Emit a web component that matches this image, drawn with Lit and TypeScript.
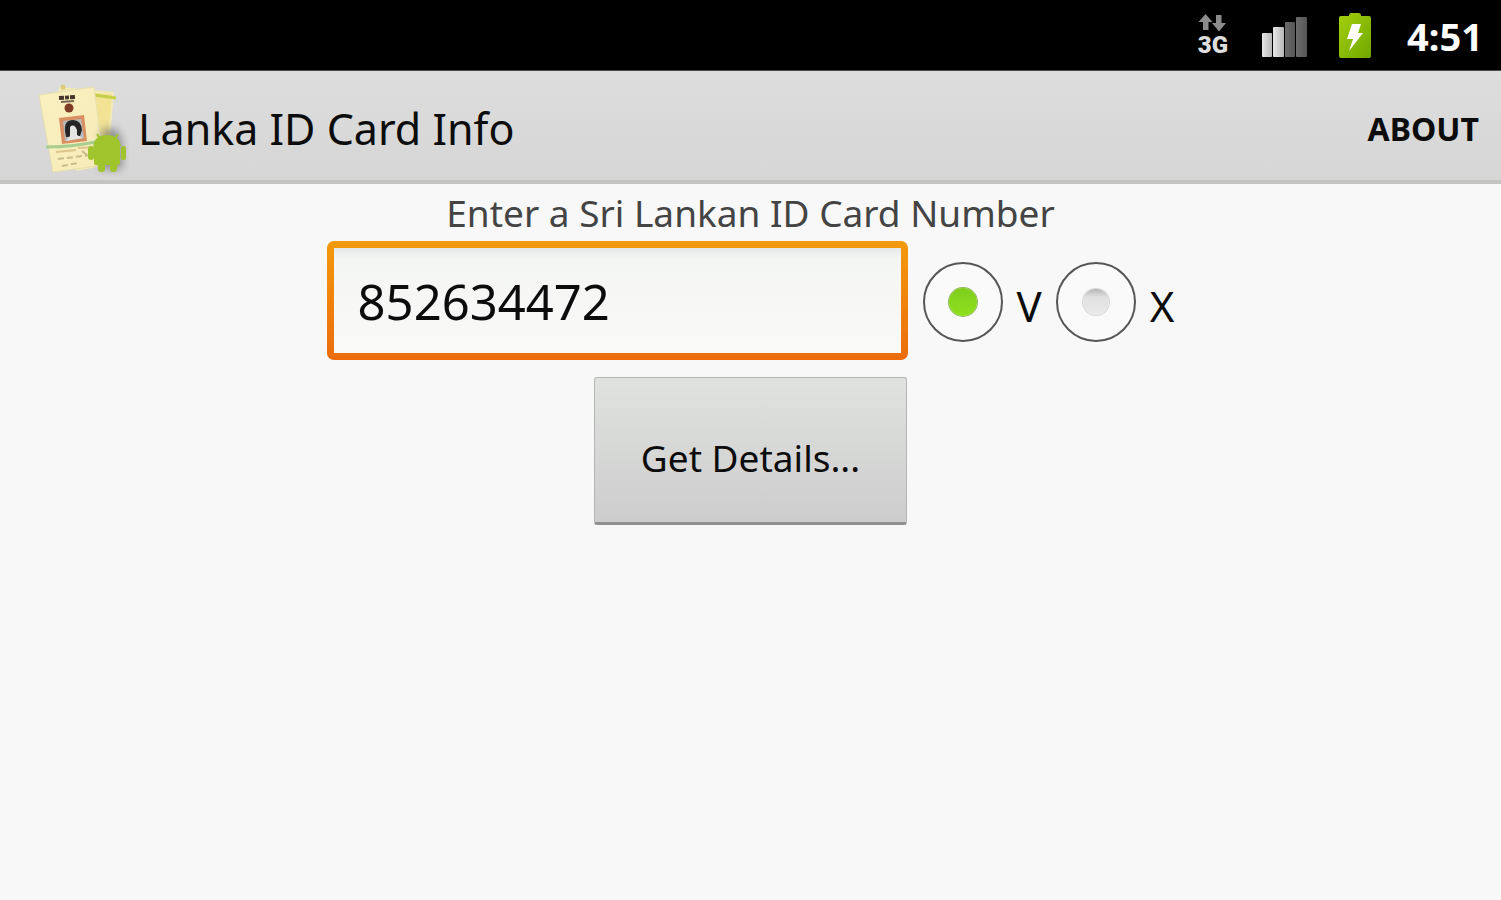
import { LitElement, html, css } from "lit";
import { customElement, state } from "lit/decorators.js";

@customElement("status-bar")
class StatusBar extends LitElement {
  static styles = css`
    :host {
      display: flex;
      align-items: center;
      justify-content: flex-end;
      box-sizing: border-box;
      height: 71px;
      padding: 0 18px 0 16px;
      background: #000;
      border-bottom: 1px solid #4a4a4a;
      color: #fff;
      font: bold 38px/52px "Noto Sans", "Open Sans", sans-serif;
    }
    svg {
      display: block;
      flex: none;
    }
    .data {
      display: flex;
      flex-direction: column;
      align-items: center;
      margin-right: 33px;
      color: #dedede;
      font: 900 24px/22px Roboto, "Noto Sans", sans-serif;
    }
    .signal {
      margin-right: 31px;
    }
    .battery {
      margin-right: 35px;
    }
    time {
      padding-top: 2px;
    }
  `;

  render() {
    return html`
      <div class="data">
        <svg width="30" height="20" viewBox="0 0 30 20" aria-hidden="true">
          <path fill="#8c8c8c" d="M7.500 0L14.500 8H10.500V16H5V8H.5ZM21 17.500L14 9H18V1H23.500V9H28Z" />
        </svg>
        <span>3G</span>
      </div>
      <svg class="signal" width="46" height="44" viewBox="0 0 46 44" aria-label="Signal strength">
        <defs>
          <linearGradient id="on" x2="1"><stop stop-color="#e6e6e6" /><stop offset="1" stop-color="#b8b8b8" /></linearGradient>
          <linearGradient id="off" x2="1"><stop stop-color="#6c6c6c" /><stop offset="1" stop-color="#565656" /></linearGradient>
        </defs>
        <rect x="1" y="20" width="10" height="24" rx="1" fill="url(#on)" />
        <rect x="12" y="14" width="11" height="30" rx="1" fill="url(#on)" />
        <rect x="24" y="9" width="10" height="35" rx="1" fill="url(#off)" />
        <rect x="35" y="4" width="11" height="40" rx="1" fill="url(#off)" />
      </svg>
      <svg class="battery" width="34" height="48" viewBox="0 0 34 48" aria-label="Battery charging">
        <defs>
          <linearGradient id="cell" y2="1"><stop stop-color="#a4cf0c" /><stop offset="1" stop-color="#70a800" /></linearGradient>
        </defs>
        <path fill="url(#cell)" d="M11 4.500Q11 2 13 2H21Q23 2 23 4.500V5H31Q33 5 33 7V45Q33 47 31 47H3Q1 47 1 45V7Q1 5 3 5H11Z" />
        <path fill="#fff" d="M14 13H23L20 22H25L11 40L15 28H9Z" />
      </svg>
      <time>4:51</time>
    `;
  }
}

@customElement("app-root")
class AppRoot extends LitElement {
  static styles = css`
    :host {
      display: flex;
      flex-direction: column;
      min-height: 100vh;
      background: #f8f8f8;
      color: #0c0c0c;
      font-family: "Noto Sans", "Open Sans", sans-serif;
    }
    header {
      display: flex;
      align-items: center;
      box-sizing: border-box;
      height: 113px;
      padding: 6px 22px 0 34px;
      background: linear-gradient(#dcdddc, #d5d6d5);
      border-bottom: 4px solid #c4c5c3;
    }
    .logo {
      flex: none;
      display: block;
      margin-right: 8px;
    }
    h1 {
      flex: 1;
      margin: 0;
      font-size: 43px;
      font-weight: 400;
      line-height: 56px;
    }
    button {
      font-family: inherit;
      color: inherit;
      cursor: pointer;
    }
    .about {
      padding: 0;
      border: 0;
      background: none;
      font-size: 32px;
      font-weight: 700;
      line-height: 56px;
    }
    form {
      display: flex;
      flex-direction: column;
      align-items: center;
    }
    .prompt {
      font-size: 37px;
      line-height: 57px;
      color: #444;
    }
    .entry {
      display: flex;
      align-items: center;
      justify-content: center;
      width: 100%;
      margin-bottom: 17px;
    }
    .number {
      flex: 0 1 581px;
      min-width: 0;
      box-sizing: border-box;
      height: 119px;
      margin-right: 15px;
      padding: 0 24px;
      border: 7px solid transparent;
      border-radius: 7px;
      outline: 0;
      background:
        linear-gradient(#e6e8e7, #f4f6f4 10px, #f9f9f8) padding-box,
        linear-gradient(#f39a0d, #ec6c0c) border-box;
      color: #0c0c0c;
      font: 49px/66px "Noto Sans", "Open Sans", sans-serif;
    }
    .option {
      display: flex;
      align-items: center;
      font-size: 42px;
      line-height: 56px;
    }
    .option + .option {
      margin-left: 14px;
    }
    .option span {
      padding-top: 10px;
    }
    .radio {
      appearance: none;
      display: grid;
      place-items: center;
      flex: none;
      box-sizing: border-box;
      width: 80px;
      height: 80px;
      margin: 2px 14px 0 0;
      border: 2px solid #565656;
      border-radius: 50%;
      background: #fafafa;
    }
    .radio::before {
      content: "";
      width: 26px;
      height: 26px;
      border-radius: 50%;
      box-shadow: 0 0 0 1px #d4d4d4;
      background: linear-gradient(#b4b4b4, #dfe0df 30%, #ebebeb);
    }
    .radio:checked::before {
      width: 28px;
      height: 28px;
      background: linear-gradient(#7fce1c, #8fe01e);
      box-shadow: 0 0 0 1px #8fb35a;
    }
    .submit {
      width: 313px;
      height: 148px;
      padding: 16px 0 0;
      border: 1px solid #b4b5b4;
      border-bottom: 3px solid #8f908f;
      border-radius: 3px;
      background: linear-gradient(#e0e2e0, #cccdcc);
      font-size: 37px;
      line-height: 56px;
    }
  `;

  @state() private suffix = "V";

  private option(value: string) {
    return html`
      <label class="option">
        <input
          class="radio"
          type="radio"
          name="suffix"
          .value=${value}
          .checked=${this.suffix === value}
          @change=${() => (this.suffix = value)}
        />
        <span>${value}</span>
      </label>
    `;
  }

  render() {
    return html`
      <status-bar></status-bar>
      <header>
        <svg class="logo" width="96" height="96" viewBox="0 0 96 96" aria-hidden="true">
          <defs>
            <filter id="soft" x="-30%" y="-30%" width="160%" height="160%"><feGaussianBlur stdDeviation="4" /></filter>
            <linearGradient id="card" x2="1" y2="1"><stop stop-color="#faf0c0" /><stop offset="1" stop-color="#f6ebb8" /></linearGradient>
          </defs>
          <path fill="#f2e9b4" d="M25 6L80 11L74 84L42 90L22 20Z" />
          <path fill="#f1e294" d="M58 12L78 13L72 72L56 70Z" />
          <path stroke="#c6cf48" stroke-width="3" fill="none" d="M60 14L82 17" />
          <circle cx="29" cy="6" r="2.500" fill="#dfc97a" />
          <path fill="url(#card)" stroke="#e9e0ae" stroke-width="1" d="M5 14L60 6L70 84L19 91Z" />
          <path stroke="#45382b" stroke-width="4" fill="none" d="M25 17L41 16" stroke-dasharray="5 1 4 1" />
          <path stroke="#776653" stroke-width="2" fill="none" d="M27 21L40 20" />
          <circle cx="35" cy="27" r="4.500" fill="#7f3a25" />
          <path fill="#d98f62" d="M25 37L50 34L53 60L28 63Z" />
          <path fill="#b6bcbe" d="M29 40L47 38L50 57L31 60Z" />
          <path fill="#272425" d="M31 50Q30 39 39 39Q47 39 48 49L46 55L32 56Z" />
          <path fill="#e4e4e2" d="M36 46Q40 42 43 49L43 54L49 57L32 60L36 55Z" />
          <path stroke="#a8cf8f" stroke-width="3" fill="none" d="M12 66Q40 66 66 60" />
          <path stroke="#dcc58c" stroke-width="2" fill="none" d="M22 71L42 69M44 67L64 66" />
          <path stroke="#c9bd8c" stroke-width="2" fill="none" stroke-dasharray="6 3" d="M24 78L56 74M28 85L44 82M48 70L58 78" />
          <path fill="#666" opacity="0.650" filter="url(#soft)" d="M68 48H82Q88 56 88 66V88H66Z" />
          <g fill="#9fc42c">
            <path d="M59 65Q61 54 73 54Q85 54 87 65Z" />
            <path d="M60 64H86V82Q86 84 84 84H62Q60 84 60 82Z" />
            <rect x="54" y="65" width="6" height="14" rx="3" />
            <rect x="87" y="65" width="5" height="14" rx="2.500" />
            <rect x="64" y="80" width="7" height="11" rx="3" />
            <rect x="76" y="80" width="7" height="11" rx="3" />
            <path stroke="#9fc42c" stroke-width="2" d="M66 58L63 53M81 58L84 53" />
          </g>
        </svg>
        <h1>Lanka ID Card Info</h1>
        <button class="about" type="button">ABOUT</button>
      </header>
      <form @submit=${(e: Event) => e.preventDefault()}>
        <label class="prompt" for="number">Enter a Sri Lankan ID Card Number</label>
        <div class="entry">
          <input class="number" id="number" type="text" inputmode="numeric" value="852634472" />
          ${this.option("V")} ${this.option("X")}
        </div>
        <button class="submit" type="submit">Get Details...</button>
      </form>
    `;
  }
}
